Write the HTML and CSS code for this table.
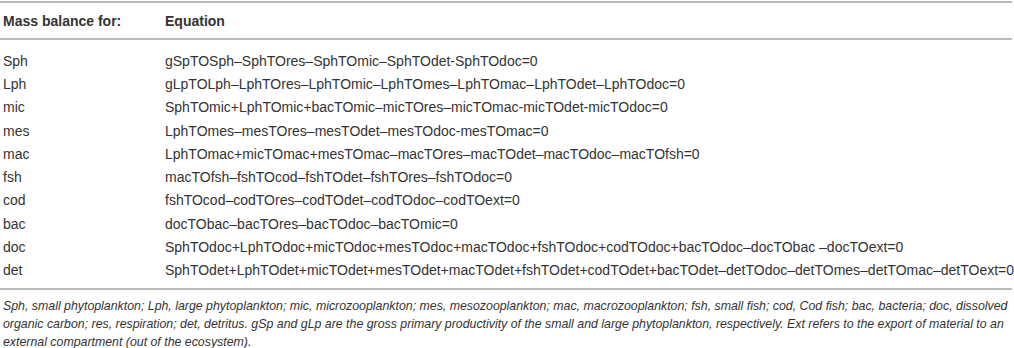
FILE: index.html
```html
<!DOCTYPE html>
<html>
<head>
<meta charset="utf-8">
<link rel="stylesheet" href="styles.css">
</head>
<body>
<div class="wrap">
<table class="tbl">
<thead>
<tr><th class="c1">Mass balance for:</th><th>Equation</th></tr>
</thead>
<tbody>
<tr class="first"><td class="c1">Sph</td><td>gSpTOSph–SphTOres–SphTOmic–SphTOdet-SphTOdoc=0</td></tr>
<tr><td class="c1">Lph</td><td>gLpTOLph–LphTOres–LphTOmic–LphTOmes–LphTOmac–LphTOdet–LphTOdoc=0</td></tr>
<tr><td class="c1">mic</td><td>SphTOmic+LphTOmic+bacTOmic–micTOres–micTOmac-micTOdet-micTOdoc=0</td></tr>
<tr><td class="c1">mes</td><td>LphTOmes–mesTOres–mesTOdet–mesTOdoc-mesTOmac=0</td></tr>
<tr><td class="c1">mac</td><td>LphTOmac+micTOmac+mesTOmac–macTOres–macTOdet–macTOdoc–macTOfsh=0</td></tr>
<tr><td class="c1">fsh</td><td>macTOfsh–fshTOcod–fshTOdet–fshTOres–fshTOdoc=0</td></tr>
<tr><td class="c1">cod</td><td>fshTOcod–codTOres–codTOdet–codTOdoc–codTOext=0</td></tr>
<tr><td class="c1">bac</td><td>docTObac–bacTOres–bacTOdoc–bacTOmic=0</td></tr>
<tr><td class="c1">doc</td><td>SphTOdoc+LphTOdoc+micTOdoc+mesTOdoc+macTOdoc+fshTOdoc+codTOdoc+bacTOdoc–docTObac –docTOext=0</td></tr>
<tr class="last"><td class="c1">det</td><td>SphTOdet+LphTOdet+micTOdet+mesTOdet+macTOdet+fshTOdet+codTOdet+bacTOdet–detTOdoc–detTOmes–detTOmac–detTOext=0</td></tr>
</tbody>
</table>
<p class="caption"><i>Sph, small phytoplankton; Lph, large phytoplankton; mic, microzooplankton; mes, mesozooplankton; mac, macrozooplankton; fsh, small fish; cod, Cod fish; bac, bacteria; doc, dissolved organic carbon; res, respiration; det, detritus. gSp and gLp are the gross primary productivity of the small and large phytoplankton, respectively. Ext refers to the export of material to an external compartment (out of the ecosystem).</i></p>
</div>
</body>
</html>
```
FILE: styles.css
```css
html, body {
  margin: 0;
  padding: 0;
  background: #fff;
}
body {
  font-family: "Liberation Sans", Arial, sans-serif;
  color: #333;
}
.wrap {
  width: 1012px;
}
.tbl {
  width: 1012px;
  table-layout: fixed;
  border-collapse: collapse;
  font-size: 14px;
  margin-top: 1px;
}
.tbl thead tr {
  border-top: 2px solid #bbb;
  border-bottom: 2px solid #bbb;
}
.tbl th {
  text-align: left;
  font-weight: bold;
  height: 35px;
  padding: 0 0 0 3px;
  vertical-align: middle;
}
.tbl td {
  height: 23.3px;
  padding: 0 0 0 3px;
  vertical-align: middle;
  white-space: nowrap;
}
.tbl .c1 {
  width: 159px;
}
.tbl tr.first td {
  padding-top: 9px;
}
.tbl tr.last td {
  padding-bottom: 6px;
}
.tbl tbody tr.last {
  border-bottom: 2px solid #bbb;
}
.caption {
  margin: 7px 0 0 3px;
  font-size: 12.35px;
  line-height: 18px;
  color: #333;
}
```
